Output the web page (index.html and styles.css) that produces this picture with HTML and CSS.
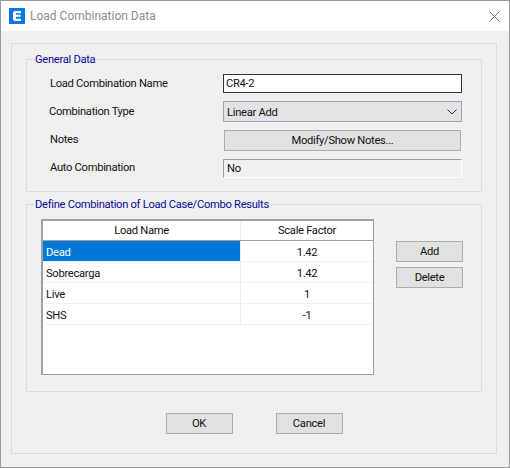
FILE: index.html
```html
<!DOCTYPE html>
<html lang="en">
<head>
    <meta charset="UTF-8">
    <title>Load Combination Data</title>
    <link rel="stylesheet" href="styles.css">
</head>
<body>
    <div class="window">
        <div class="titlebar">
            <svg class="app-icon" width="16" height="16" viewBox="0 0 16 16">
                <rect width="16" height="16" fill="#0a78e0"/>
                <path d="M6 3h6v2.2H7v1.6h4.6v2H7v1.9h5V13H6Q4 13 4 11V5Q4 3 6 3z" fill="#fff"/>
            </svg>
            <span class="title">Load Combination Data</span>
            <svg class="close" width="11" height="11" viewBox="0 0 11 11">
                <path d="M.5.5l10 10M10.5.5l-10 10" stroke="#6e6e6e" fill="none"/>
            </svg>
        </div>

        <div class="content">
            <div class="panel">
                <fieldset class="group group-general">
                    <legend>General Data</legend>
                    <div class="form">
                        <label class="label-first">Load Combination Name</label>
                        <div class="input">CR4-2</div>
                        <label class="nudge">Combination Type</label>
                        <div class="select">
                            <span>Linear Add</span>
                            <svg width="10" height="6" viewBox="0 0 10 6">
                                <path d="M.5.5L5 5 9.5.5" stroke="#333" fill="none"/>
                            </svg>
                        </div>
                        <label>Notes</label>
                        <button class="btn btn-notes">Modify/Show Notes...</button>
                        <label>Auto Combination</label>
                        <div class="readonly">No</div>
                    </div>
                </fieldset>

                <fieldset class="group group-results">
                    <legend>Define Combination of Load Case/Combo Results</legend>
                    <div class="results">
                        <div class="grid">
                            <div class="grid-head">
                                <div class="col-name">Load Name</div>
                                <div class="col-factor">Scale Factor</div>
                            </div>
                            <div class="grid-row selected">
                                <div class="col-name">Dead</div>
                                <div class="col-factor">1.42</div>
                            </div>
                            <div class="grid-row">
                                <div class="col-name">Sobrecarga</div>
                                <div class="col-factor">1.42</div>
                            </div>
                            <div class="grid-row">
                                <div class="col-name">Live</div>
                                <div class="col-factor">1</div>
                            </div>
                            <div class="grid-row">
                                <div class="col-name">SHS</div>
                                <div class="col-factor">-1</div>
                            </div>
                        </div>
                        <div class="side-buttons">
                            <button class="btn">Add</button>
                            <button class="btn">Delete</button>
                        </div>
                    </div>
                </fieldset>

                <div class="actions">
                    <button class="btn">OK</button>
                    <button class="btn">Cancel</button>
                </div>
            </div>
        </div>
    </div>
</body>
</html>
```

FILE: styles.css
```css
* {
    box-sizing: border-box;
}
body {
    margin: 0;
    font-family: Roboto, "Liberation Sans", sans-serif;
    font-size: 11.2px;
    letter-spacing: -0.3px;
    color: #111;
    overflow: hidden;
}
.window {
    width: 510px;
    height: 468px;
    border: 1px solid #999;
    background: #f0f0f0;
    display: flex;
    flex-direction: column;
}
.titlebar {
    height: 30px;
    background: #fff;
    display: flex;
    align-items: center;
    padding: 0 9px 0 8px;
    flex-shrink: 0;
}
.app-icon {
    margin-right: 5px;
}
.title {
    flex: 1;
    font-size: 12px;
    letter-spacing: 0;
    color: #8c8c8c;
}
.content {
    flex: 1;
    padding: 12px 12px 13px 10px;
}
.panel {
    height: 100%;
    border: 1px solid #dcdcdc;
    padding: 8px 14px 0 14px;
}
.group {
    margin: 0;
    padding: 0;
    border: 1px solid #dcdcdc;
    min-width: 0;
}
.group legend {
    margin-left: 7px;
    padding: 0 2px 0 1px;
    color: #0a0a9a;
    line-height: 15px;
}
.group-general {
    height: 140px;
}
.form {
    display: grid;
    grid-template-columns: 173px 239px;
    grid-template-rows: 19px 21px 21px 19px;
    row-gap: 8px;
    align-items: center;
    padding: 7px 0 0 23px;
}
.form label {
    margin-top: -2px;
}
.form .label-first {
    margin-top: 0;
}
.form .nudge {
    margin-left: -1px;
    margin-top: 0;
}
.input {
    height: 19px;
    border: 1px solid #333;
    background: #fff;
    padding-left: 2px;
    line-height: 17px;
}
.select {
    height: 21px;
    border: 1px solid #9aa5b1;
    background: #e2e3e5;
    padding: 1px 4px 0 3px;
    display: flex;
    align-items: center;
    justify-content: space-between;
}
.btn {
    font: inherit;
    letter-spacing: inherit;
    color: inherit;
    height: 21px;
    width: 67px;
    padding: 0;
    border: 1px solid #adadad;
    background: #e1e1e1;
}
.btn-notes {
    width: 237px;
    margin-left: 1px;
}
.readonly {
    height: 19px;
    border: 1px solid;
    border-color: #a0a0a0 #fff #fff #a0a0a0;
    padding-left: 3px;
    line-height: 17px;
}
.group-results {
    height: 195px;
    margin-top: 5px;
}
.results {
    display: flex;
    padding: 7px 0 0 14px;
}
.grid {
    width: 333px;
    height: 156px;
    background: #fff;
    border: 1px solid #a0a0a0;
    border-width: 2px 1px 1px 2px;
}
.grid-head,
.grid-row {
    display: flex;
    border-bottom: 1px solid #f0f0f0;
}
.grid-head {
    height: 20px;
    line-height: 19px;
    border-bottom-color: #a0a0a0;
    text-align: center;
}
.grid-row {
    height: 21px;
    line-height: 23px;
}
.col-name {
    width: 198px;
    border-right: 1px solid #f0f0f0;
}
.col-factor {
    flex: 1;
    text-align: center;
}
.grid-row .col-name {
    padding-left: 3px;
}
.selected .col-name {
    background: #0078d7;
    color: #fff;
}
.side-buttons {
    display: flex;
    flex-direction: column;
    gap: 5px;
    margin: 22px 0 0 22px;
}
.actions {
    display: flex;
    justify-content: center;
    gap: 43px;
    margin-top: 21px;
}
```
